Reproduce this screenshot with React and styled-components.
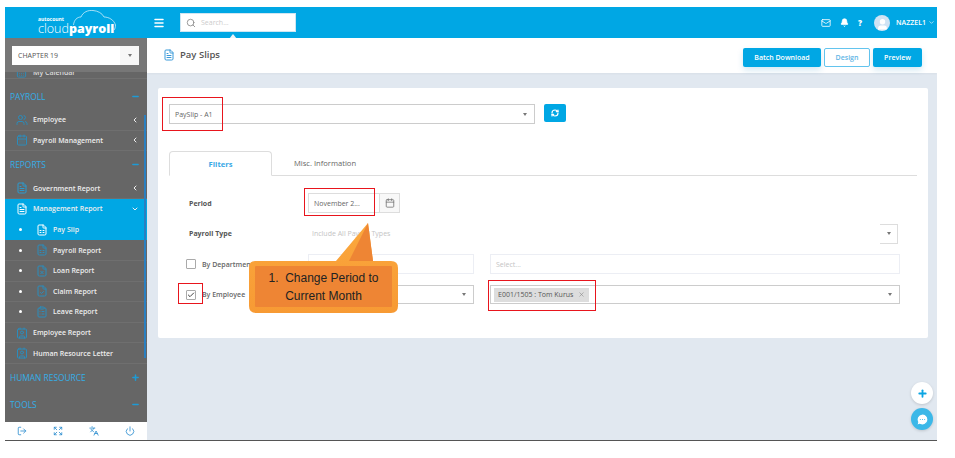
import styled, { createGlobalStyle } from "styled-components";
import {
  Search, Menu, Mail, Bell, User, ChevronDown, ChevronLeft, FileText, Users, CalendarDays, Calendar,
  RefreshCw, Check, X, Plus, MessageCircleMore, Power, LogOut, Expand, Languages, FileSpreadsheet,
  FileX, FileCheck, ClipboardList, Contact, Minus,
} from "lucide-react";

const GlobalStyle = createGlobalStyle`
  html, body { margin: 0; padding: 0; background: #fff; }
  body { font-family: "Open Sans", "Liberation Sans", sans-serif; color: #555; }
  * { box-sizing: border-box; }
`;

function LogoCloud() {
  return (
    <CloudSvg viewBox="0 0 43 21" fill="none" stroke="#e6f6fd" strokeWidth="0.7">
      <path d="M0.5 15 C1 10 4 7 8 7 C10 2 15 0 20 0.5 C25 1 29 3 31 7 C36 7 41 10 42.5 15 C42.5 17 42 19 41 20" />
    </CloudSvg>
  );
}

function Callout() {
  return (
    <CalloutBox>
      <svg width="151" height="92" viewBox="0 0 151 92">
        <defs>
          <linearGradient id="orange" x1="0" y1="0" x2="0" y2="1">
            <stop offset="0" stopColor="#fba83d" />
            <stop offset="1" stopColor="#f79a34" />
          </linearGradient>
        </defs>
        <path
          d="M7 39 H88 L120 1 L125 39 H143 Q150 39 150 46 V84 Q150 91 143 91 H8 Q1 91 1 84 V46 Q1 39 7 39 Z"
          fill="url(#orange)"
        />
        <path d="M120 1 L125 39 H101 Z" fill="#ee8534" />
        <rect x="7" y="44" width="137" height="41" rx="1" fill="#ee8534" />
      </svg>
      <CalloutText>
        <span>1.&nbsp; Change Period to</span>
        <span>Current Month</span>
      </CalloutText>
    </CalloutBox>
  );
}

const reportItems = [
  { icon: FileSpreadsheet, label: "Payroll Report" },
  { icon: FileX, label: "Loan Report" },
  { icon: FileCheck, label: "Claim Report" },
  { icon: ClipboardList, label: "Leave Report" },
];

function App() {
  return (
    <>
      <GlobalStyle />
      <Frame>
        <TopBar>
          <LogoArea>
            <LogoSmall>autocount</LogoSmall>
            <LogoMain>cloud<b>payroll</b></LogoMain>
            <LogoCloud />
          </LogoArea>
          <Burger><Menu size={12} strokeWidth={3} /></Burger>
          <SearchBox>
            <Search size={10} color="#888" />
            <SearchHint>Search...</SearchHint>
          </SearchBox>
          <TopRight>
            <Mail size={10} />
            <Bell size={9} fill="#fff" />
            <QuestionMark>?</QuestionMark>
            <Avatar><User size={13} fill="#fff" color="#fff" /></Avatar>
            <UserName>NAZZEL1</UserName>
            <ChevronDown size={7} />
          </TopRight>
        </TopBar>

        <Sidebar>
          <CompanyWrap>
            <CompanySelect>
              <span>CHAPTER 19</span>
              <CaretBox><Caret /></CaretBox>
            </CompanySelect>
          </CompanyWrap>
          <ClippedRow>
            <CalendarDays size={11} color="#2a8dbd" />
            <span>My Calendar</span>
          </ClippedRow>
          <Section $height={31} $top={3}>
            <span>PAYROLL</span>
            <Minus size={9} strokeWidth={4} color="#1d9bd6" />
          </Section>
          <NavRow>
            <Users size={12} color="#2a8dbd" />
            <NavLabel>Employee</NavLabel>
            <ChevronLeft size={8} strokeWidth={3} />
          </NavRow>
          <NavRow>
            <CalendarDays size={12} color="#2a8dbd" />
            <NavLabel>Payroll Management</NavLabel>
            <ChevronLeft size={8} strokeWidth={3} />
          </NavRow>
          <Section $height={27.4}>
            <span>REPORTS</span>
            <Minus size={9} strokeWidth={4} color="#1d9bd6" />
          </Section>
          <NavRow>
            <FileText size={12} color="#2a9bd0" />
            <NavLabel>Government Report</NavLabel>
            <ChevronLeft size={8} strokeWidth={3} />
          </NavRow>
          <NavRow $active>
            <FileText size={12} color="#fff" />
            <NavLabel>Management Report</NavLabel>
            <ChevronDown size={8} strokeWidth={3} />
          </NavRow>
          <SubRow $active>
            <Dot />
            <FileSpreadsheet size={12} color="#fff" />
            <NavLabel>Pay Slip</NavLabel>
          </SubRow>
          {reportItems.map((item) => (
            <SubRow key={item.label}>
              <Dot />
              <item.icon size={12} color="#2a8dbd" />
              <NavLabel>{item.label}</NavLabel>
            </SubRow>
          ))}
          <NavRow>
            <Contact size={12} color="#2a8dbd" />
            <NavLabel>Employee Report</NavLabel>
          </NavRow>
          <NavRow>
            <Contact size={12} color="#2a8dbd" />
            <NavLabel>Human Resource Letter</NavLabel>
          </NavRow>
          <Section $height={28}>
            <span>HUMAN RESOURCE</span>
            <Plus size={9} strokeWidth={4} color="#1d9bd6" />
          </Section>
          <Section $height={26}>
            <span>TOOLS</span>
            <Minus size={9} strokeWidth={4} color="#1d9bd6" />
          </Section>
          <SideSpacer />
          <SideFooter>
            <LogOut size={10} />
            <Expand size={10} />
            <Languages size={10} />
            <Power size={10} />
          </SideFooter>
          <ScrollThumb />
        </Sidebar>

        <Main>
          <PageHeader>
            <PageTitle>
              <FileText size={12} color="#3a9ad9" />
              <h1>Pay Slips</h1>
            </PageTitle>
            <HeaderButtons>
              <ActionButton $wide>Batch Download</ActionButton>
              <OutlineButton>Design</OutlineButton>
              <ActionButton>Preview</ActionButton>
            </HeaderButtons>
          </PageHeader>

          <Content>
            <Card>
              <TemplateRow>
                <Field $grow>
                  <FieldText>PaySlip - A1</FieldText>
                  <Caret />
                </Field>
                <RefreshButton><RefreshCw size={8} strokeWidth={3.5} /></RefreshButton>
              </TemplateRow>

              <Tabs>
                <ActiveTab>Filters</ActiveTab>
                <Tab>Misc. Information</Tab>
              </Tabs>

              <FormRow>
                <FormLabel>Period</FormLabel>
                <PeriodField>
                  <FieldText>November 2...</FieldText>
                  <AddOn><Calendar size={10} color="#777" /></AddOn>
                </PeriodField>
              </FormRow>

              <FormRow>
                <FormLabel>Payroll Type</FormLabel>
                <GhostField>
                  <GhostText>Include All Payroll Types</GhostText>
                  <GhostCaret><Caret /></GhostCaret>
                </GhostField>
              </FormRow>

              <FormRow>
                <CheckLabel>
                  <CheckBox />
                  <CheckText>By Department</CheckText>
                </CheckLabel>
                <ShortField $soft />
                <Field $soft $grow>
                  <GhostText>Select...</GhostText>
                </Field>
              </FormRow>

              <FormRow>
                <CheckLabel>
                  <CheckBox $checked><Check size={8} strokeWidth={3} color="#444" /></CheckBox>
                  <CheckText>By Employee</CheckText>
                </CheckLabel>
                <ShortField><span /><Caret /></ShortField>
                <Field $grow $tight>
                  <Tag>E001/1505 : Tom Kurus <X size={7} color="#888" /></Tag>
                  <Caret />
                </Field>
              </FormRow>
            </Card>
          </Content>

          <FabPlus><Plus size={11} strokeWidth={4} color="#0ba5e3" /></FabPlus>
          <FabChat><MessageCircleMore size={13} fill="#fff" color="#3cb8e8" /></FabChat>
        </Main>

        <RedBox $x={157} $y={90} $w={61} $h={34} />
        <RedBox $x={299} $y={181} $w={71} $h={28} />
        <RedBox $x={173} $y={276} $w={25} $h={21} />
        <RedBox $x={483} $y={273} $w={108} $h={31} />
        <Callout />
      </Frame>
    </>
  );
}

const Frame = styled.div`
  position: relative;
  margin: 7px 0 0 5px;
  width: 932px;
  height: 434px;
  display: grid;
  grid-template-columns: 142px 1fr;
  grid-template-rows: 31px 1fr;
  border-bottom: 1px solid #555;
  overflow: hidden;
`;

const TopBar = styled.header`
  grid-column: 1 / 3;
  background: #00a7e4;
  color: #fff;
  display: flex;
  align-items: center;
`;

const LogoArea = styled.div`
  position: relative;
  width: 148px;
  height: 31px;
  padding: 9px 0 0 33px;
  color: #fff;
`;

const LogoSmall = styled.div`
  font-size: 5px;
  line-height: 6px;
  font-weight: 700;
`;

const LogoMain = styled.div`
  font-size: 12.5px;
  line-height: 14px;
  font-weight: 300;
  b { font-weight: 800; }
`;

const CloudSvg = styled.svg`
  position: absolute;
  left: 68px;
  top: 3px;
  width: 43px;
  height: 21px;
`;

const Burger = styled.div`
  width: 27px;
  display: flex;
`;

const SearchBox = styled.div`
  position: relative;
  width: 116px;
  height: 19px;
  background: #fff;
  border: 1px solid #cfe6f2;
  display: flex;
  align-items: center;
  gap: 5px;
  padding-left: 5px;
  &::after {
    content: "";
    position: absolute;
    left: 48px;
    bottom: -8px;
    border: 4px solid transparent;
    border-top-width: 0;
    border-bottom: 5px solid #eef3f7;
  }
`;

const SearchHint = styled.span`
  font-size: 7px;
  color: #ccc;
`;

const TopRight = styled.div`
  margin-left: auto;
  padding-right: 2px;
  display: flex;
  align-items: center;
  gap: 9px;
`;

const QuestionMark = styled.span`
  font-size: 8px;
  font-weight: 800;
`;

const Avatar = styled.div`
  width: 16px;
  height: 16px;
  border-radius: 50%;
  background: #cfe3f4;
  display: flex;
  align-items: flex-end;
  justify-content: center;
  overflow: hidden;
  margin-left: 3px;
`;

const UserName = styled.span`
  font-size: 7px;
  font-weight: 600;
  margin: 0 -7px 0 -3px;
`;

const Sidebar = styled.aside`
  position: relative;
  background: #666;
  display: flex;
  flex-direction: column;
  overflow: hidden;
`;

const CompanyWrap = styled.div`
  height: 34px;
  flex: none;
  background: #777;
  padding: 8px 8px 0 7px;
`;

const CompanySelect = styled.div`
  height: 19px;
  background: #fff;
  display: flex;
  align-items: center;
  justify-content: space-between;
  padding-left: 6px;
  font-size: 7px;
  color: #555;
`;

const CaretBox = styled.div`
  width: 19px;
  height: 100%;
  background: #f7f7f7;
  display: flex;
  align-items: center;
  justify-content: center;
`;

const Caret = styled.i`
  width: 0;
  height: 0;
  flex: none;
  border: 2.5px solid transparent;
  border-top: 3px solid #777;
  border-bottom-width: 0;
`;

const ClippedRow = styled.div`
  height: 7px;
  flex: none;
  overflow: hidden;
  display: flex;
  align-items: flex-end;
  gap: 6px;
  padding-left: 11px;
  font-size: 7px;
  font-weight: 600;
  color: #ddd;
  line-height: 10px;
  border-bottom: 1px solid #707070;
  & > * { flex: none; }
`;

const Section = styled.div`
  height: ${(p) => p.$height}px;
  padding: ${(p) => p.$top || 0}px 7px 0 5px;
  flex: none;
  display: flex;
  align-items: center;
  justify-content: space-between;
  font-size: 8.4px;
  color: #35aee6;
`;

const NavRow = styled.div`
  height: 20.6px;
  flex: none;
  display: flex;
  align-items: center;
  gap: 5px;
  padding: 0 8px 0 11px;
  color: #eee;
  background: ${(p) => (p.$active ? "#00a7e4" : "transparent")};
  border-bottom: 1px solid ${(p) => (p.$active ? "#00a7e4" : "#6f6f6f")};
`;

const SubRow = styled(NavRow)`
  padding-left: 14px;
`;

const NavLabel = styled.span`
  flex: 1;
  font-size: 7px;
  font-weight: 600;
  white-space: nowrap;
`;

const Dot = styled.i`
  width: 3px;
  height: 3px;
  border-radius: 50%;
  background: #fff;
  margin-right: 9px;
`;

const SideSpacer = styled.div`
  flex: 1;
`;

const SideFooter = styled.div`
  height: 18px;
  flex: none;
  background: #fff;
  display: flex;
  align-items: center;
  justify-content: space-between;
  color: #2f8fd0;
  padding: 0 12px;
`;

const ScrollThumb = styled.div`
  position: absolute;
  right: 1px;
  top: 77px;
  width: 2px;
  height: 243px;
  background: #2a7fc0;
`;

const Main = styled.main`
  position: relative;
  display: flex;
  flex-direction: column;
  background: #e1e8f0;
`;

const PageHeader = styled.div`
  height: 35px;
  flex: none;
  background: #fff;
  display: flex;
  align-items: center;
  justify-content: space-between;
  padding: 0 15px 2px 16px;
  box-shadow: 0 1px 2px rgba(0, 0, 0, 0.04);
`;

const PageTitle = styled.div`
  display: flex;
  align-items: center;
  gap: 5px;
  h1 {
    margin: 0;
    font-size: 9.5px;
    font-weight: 600;
    color: #555;
  }
`;

const HeaderButtons = styled.div`
  display: flex;
  gap: 3px;
  margin-top: 5px;
`;

const ActionButton = styled.button`
  width: ${(p) => (p.$wide ? "78px" : "49px")};
  height: 19px;
  border: 0;
  border-radius: 2px;
  background: #00a7e4;
  color: #fff;
  font: 600 7px "Open Sans", sans-serif;
  box-shadow: 0 3px 6px rgba(0, 130, 190, 0.18);
`;

const OutlineButton = styled.button`
  width: 46px;
  height: 19px;
  border: 1px solid #63c4ee;
  border-radius: 2px;
  background: #fff;
  color: #63b6e6;
  font: 600 7px "Open Sans", sans-serif;
`;

const Content = styled.div`
  padding: 15px 9px 0 11px;
`;

const Card = styled.section`
  height: 250px;
  background: #fff;
  border-radius: 2px;
  padding: 16px 11px 0;
`;

const TemplateRow = styled.div`
  display: flex;
  gap: 9px;
  width: 397px;
  margin-bottom: 27px;
`;

const Field = styled.div`
  height: ${(p) => (p.$tight ? "19px" : "20px")};
  flex: ${(p) => (p.$grow ? 1 : "none")};
  display: flex;
  align-items: center;
  justify-content: space-between;
  padding: 0 7px 0 ${(p) => (p.$tight ? "3px" : "5px")};
  border: 1px solid ${(p) => (p.$soft ? "#eceef4" : "#ccc")};
`;

const FieldText = styled.span`
  font-size: 7px;
  color: #666;
`;

const RefreshButton = styled.button`
  width: 22px;
  height: 18px;
  flex: none;
  border: 0;
  border-radius: 2px;
  background: #00a7e4;
  color: #fff;
  padding: 0;
  display: flex;
  align-items: center;
  justify-content: center;
`;

const Tabs = styled.div`
  display: flex;
  height: 25px;
  border-bottom: 1px solid #ddd;
  margin-bottom: 17px;
`;

const Tab = styled.div`
  display: flex;
  align-items: center;
  width: 103px;
  padding-left: 22px;
  white-space: nowrap;
  font-size: 7.6px;
  color: #666;
`;

const ActiveTab = styled(Tab)`
  justify-content: center;
  padding-left: 0;
  color: #3aa9e6;
  font-weight: 700;
  background: #fff;
  border: 1px solid #ddd;
  border-bottom: 1px solid #fff;
  border-radius: 4px 4px 0 0;
  height: 25px;
`;

const FormRow = styled.div`
  display: flex;
  align-items: center;
  height: 20px;
  width: 731px;
  margin-bottom: 10.6px;
  gap: 13px;
`;

const FormLabel = styled.div`
  width: 126px;
  padding-left: 20px;
  flex: none;
  font-size: 7px;
  font-weight: 700;
  color: #555;
`;

const CheckLabel = styled.div`
  width: 126px;
  flex: none;
  display: flex;
  align-items: center;
  gap: 6px;
  padding-left: 17px;
`;

const CheckBox = styled.div`
  width: 10px;
  height: 10px;
  flex: none;
  border: 1px solid #aaa;
  border-radius: 1px;
  display: flex;
  align-items: center;
  justify-content: center;
`;

const CheckText = styled.span`
  font-size: 7px;
  font-weight: 600;
  color: #666;
  white-space: nowrap;
`;

const PeriodField = styled.div`
  width: 92px;
  height: 20px;
  display: flex;
  align-items: center;
  justify-content: space-between;
  border: 1px solid #ddd;
  padding-left: 5px;
`;

const AddOn = styled.div`
  width: 20px;
  height: 100%;
  display: flex;
  align-items: center;
  justify-content: center;
  background: #f8f8f8;
  border-left: 1px solid #ddd;
`;

const GhostField = styled.div`
  flex: 1;
  margin-right: 2px;
  height: 20px;
  display: flex;
  align-items: center;
  justify-content: space-between;
  padding-left: 4px;
`;

const GhostText = styled.span`
  font-size: 7px;
  color: #c4c4c4;
`;

const GhostCaret = styled.div`
  width: 18px;
  height: 100%;
  border: 1px solid #ddd;
  border-left: 0;
  display: flex;
  align-items: center;
  justify-content: center;
`;

const ShortField = styled(Field)`
  width: 166px;
  height: ${(p) => (p.$soft ? "20px" : "19px")};
  margin-right: 3px;
`;

const Tag = styled.div`
  height: 14px;
  display: flex;
  align-items: center;
  gap: 5px;
  background: #ddd;
  padding: 0 4px;
  font-size: 7px;
  color: #555;
  white-space: nowrap;
`;

const FabPlus = styled.div`
  position: absolute;
  right: 4px;
  bottom: 36px;
  width: 22px;
  height: 22px;
  border-radius: 50%;
  background: #fff;
  display: flex;
  align-items: center;
  justify-content: center;
  box-shadow: 0 1px 3px rgba(0, 0, 0, 0.15);
`;

const FabChat = styled(FabPlus)`
  bottom: 10px;
  background: #3cb8e8;
`;

const RedBox = styled.div`
  position: absolute;
  left: ${(p) => p.$x}px;
  top: ${(p) => p.$y}px;
  width: ${(p) => p.$w}px;
  height: ${(p) => p.$h}px;
  border: 1.5px solid #e8151d;
  pointer-events: none;
`;

const CalloutBox = styled.div`
  position: absolute;
  left: 243px;
  top: 215px;
  width: 151px;
  height: 92px;
  svg { display: block; }
`;

const CalloutText = styled.div`
  position: absolute;
  left: 1px;
  right: 1px;
  top: 39px;
  height: 52px;
  display: flex;
  flex-direction: column;
  align-items: center;
  justify-content: center;
  font: 400 12px/18px "Liberation Sans", Arial, sans-serif;
  color: #222;
`;

export default App;
